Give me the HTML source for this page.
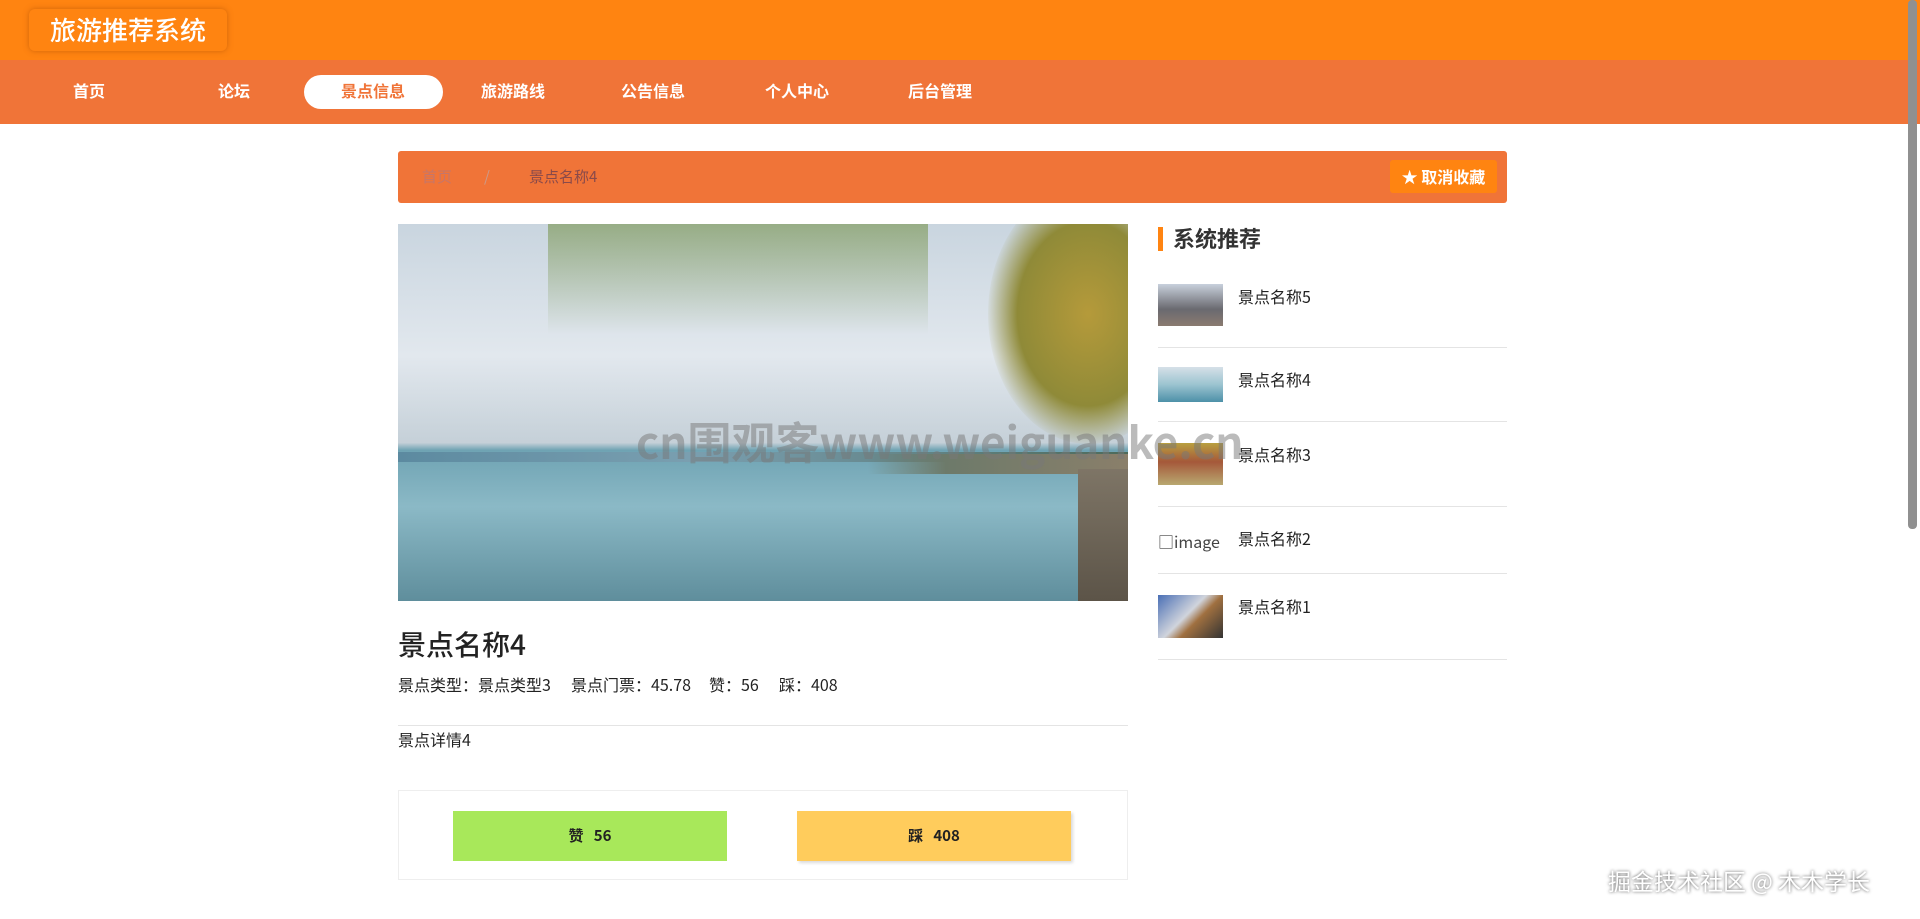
<!DOCTYPE html>
<html><head><meta charset="utf-8"><style>
*{margin:0;padding:0;box-sizing:border-box}
body{width:1920px;height:919px;overflow:hidden;background:#fff;font-family:"Noto Sans CJK SC","Liberation Sans",sans-serif;position:relative;color:#333}
.abs{position:absolute}
.hdr{left:0;top:0;width:1920px;height:60px;background:#FF8411;box-shadow:0 2px 4px rgba(0,0,0,.15)}
.logo{left:29px;top:9px;width:198px;height:42px;border-radius:6px;background:#FF8411;box-shadow:0 0 6px rgba(160,70,0,.5);color:#fff;font-size:26px;line-height:42px;text-align:center;font-weight:500}
.nav{left:0;top:60px;width:1920px;height:64px;background:#F07438}
.nav span{position:absolute;top:-2px;line-height:64px;color:#fff;font-size:16px;font-weight:bold;transform:translateX(-50%)}
.pill{left:304px;top:75px;width:139px;height:34px;border-radius:17px;background:#fff}
.bc{left:398px;top:151px;width:1109px;height:52px;background:#F07438;border-radius:3px}
.star{left:1390px;top:160px;width:107px;height:33px;background:#FF8411;border-radius:3px;color:#fff;font-size:16px;font-weight:bold;line-height:33px;text-align:center}
.img{left:398px;top:224px;width:730px;height:377px;overflow:hidden;background:linear-gradient(#c9d5df 0%,#e2e8ee 35%,#c5d0d8 58%,#6fa3b3 60%,#8bb9c6 75%,#5f8e9c 100%)}
.thumb{position:absolute;left:1158px;width:65px}
.sep{position:absolute;left:1158px;width:349px;height:1px;background:#e4e4e4}
.name{position:absolute;left:1238px;font-size:16px;color:#222;line-height:20px}
.meta{position:absolute;top:673px;font-size:16px;line-height:22px;color:#222;white-space:nowrap}
</style></head><body>
<div class="abs hdr"></div>
<div class="abs logo">旅游推荐系统</div>
<div class="abs nav">
<span style="left:89px">首页</span><span style="left:234px">论坛</span>
<span style="left:513px">旅游路线</span><span style="left:653px">公告信息</span><span style="left:797px">个人中心</span><span style="left:940px">后台管理</span>
</div>
<div class="abs pill"></div>
<div class="abs" style="left:373px;top:58px;line-height:64px;transform:translateX(-50%);color:#F07438;font-size:16px;font-weight:bold">景点信息</div>
<div class="abs bc"></div>
<div class="abs" style="left:422px;top:167px;font-size:15px;line-height:20px;color:#b77;opacity:.8">首页</div>
<div class="abs" style="left:484px;top:167px;font-size:15px;line-height:20px;color:#c98">/</div>
<div class="abs" style="left:529px;top:167px;font-size:15px;line-height:20px;color:#8a4a4a">景点名称4</div>
<div class="abs star">★ 取消收藏</div>
<div class="abs img">
 <div class="abs" style="left:0;top:228px;width:730px;height:10px;background:linear-gradient(90deg,#5c8aa0,#7a9fb0 40%,#6c8f98 60%,#4d6a5a)"></div>
 <div class="abs" style="left:470px;top:230px;width:260px;height:20px;background:linear-gradient(90deg,rgba(90,110,90,0),#6d7a6a 30%,#8a7f6a)"></div>
 <div class="abs" style="left:680px;top:245px;width:50px;height:132px;background:linear-gradient(#7e7566,#5c5448)"></div>
 <div class="abs" style="left:590px;top:-40px;width:200px;height:260px;border-radius:50%;background:radial-gradient(#b59a3a,#8f8a38 50%,rgba(140,140,60,0) 72%)"></div>
 <div class="abs" style="left:150px;top:0;width:380px;height:110px;background:linear-gradient(rgba(110,140,60,.55),rgba(130,160,80,0))"></div>
</div>
<div class="abs" style="left:398px;top:624px;font-size:28px;line-height:40px;color:#222;font-weight:500">景点名称4</div>
<div class="meta" style="left:398px">景点类型：景点类型3</div>
<div class="meta" style="left:571px">景点门票：45.78</div>
<div class="meta" style="left:709px">赞：56</div>
<div class="meta" style="left:779px">踩：408</div>
<div class="abs" style="left:398px;top:725px;width:730px;height:1px;background:#e4e4e4"></div>
<div class="abs" style="left:398px;top:728px;font-size:16px;line-height:22px;color:#222">景点详情4</div>
<div class="abs" style="left:398px;top:790px;width:730px;height:90px;border:1px solid #eee"></div>
<div class="abs" style="left:453px;top:811px;width:274px;height:50px;background:#A8E85A;text-align:center;line-height:50px;font-size:15px;font-weight:bold;color:#222">赞&nbsp;&nbsp;&nbsp;56</div>
<div class="abs" style="left:797px;top:811px;width:274px;height:50px;background:#FFCC5C;text-align:center;line-height:50px;font-size:15px;font-weight:bold;color:#222;box-shadow:2px 2px 3px rgba(0,0,0,.15)">踩&nbsp;&nbsp;&nbsp;408</div>
<div class="abs" style="left:1158px;top:227px;width:5px;height:24px;background:#FF8411"></div>
<div class="abs" style="left:1173px;top:223px;font-size:22px;line-height:30px;font-weight:bold;color:#333">系统推荐</div>
<div class="thumb" style="top:284px;height:42px;background:linear-gradient(#c8d0dc,#6a6a70 60%,#8a7a70)"></div>
<div class="name" style="top:286px">景点名称5</div>
<div class="sep" style="top:347px"></div>
<div class="thumb" style="top:367px;height:35px;background:linear-gradient(#d6e0e8,#9cc4d0 50%,#4d90a8)"></div>
<div class="name" style="top:369px">景点名称4</div>
<div class="sep" style="top:421px"></div>
<div class="thumb" style="top:443px;height:42px;background:linear-gradient(#b9a040,#a5583a 45%,#b8a870)"></div>
<div class="name" style="top:444px">景点名称3</div>
<div class="sep" style="top:506px"></div>
<div class="name" style="left:1158px;top:531px;color:#444">&#9633;image</div>
<div class="name" style="top:528px">景点名称2</div>
<div class="sep" style="top:573px"></div>
<div class="thumb" style="top:595px;height:43px;background:linear-gradient(135deg,#4a6fb5,#d0d4dc 45%,#a07040 60%,#333)"></div>
<div class="name" style="top:596px">景点名称1</div>
<div class="sep" style="top:659px"></div>
<div class="abs" style="left:636px;top:412px;font-size:44px;line-height:56px;font-weight:bold;color:rgba(120,120,120,.5);white-space:nowrap">cn围观客www.weiguanke.cn</div>
<div class="abs" style="left:1608px;top:864px;font-size:23px;line-height:32px;color:#fff;text-shadow:0 0 3px #555;white-space:nowrap">掘金技术社区 @ 木木学长</div>
<div class="abs" style="left:1908px;top:0;width:9px;height:529px;background:#909090;border-radius:4px"></div>
</body></html>
